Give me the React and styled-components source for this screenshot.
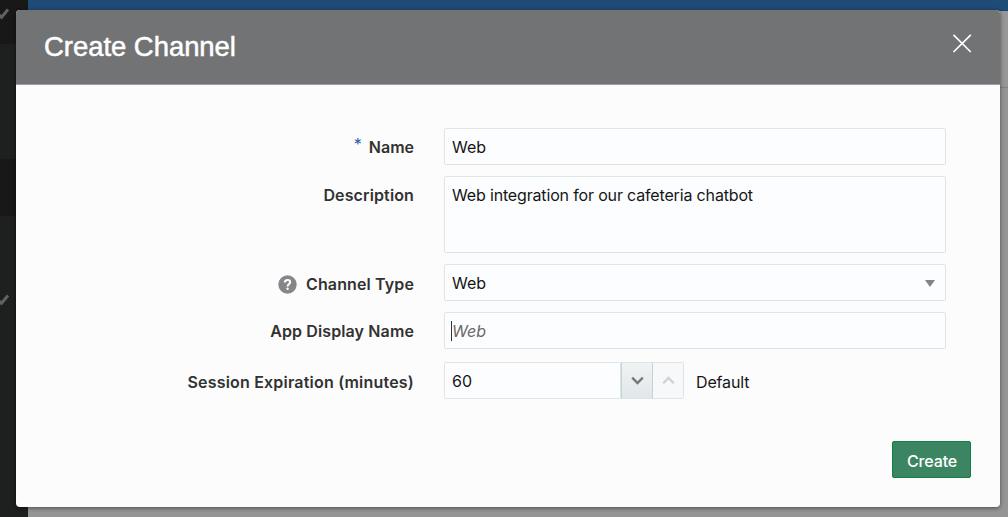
import React from "react";
import styled, { createGlobalStyle } from "styled-components";

const GlobalStyle = createGlobalStyle`
  *, *::before, *::after { box-sizing: border-box; }
  body { margin: 0; overflow: hidden; background: #959595; }
`;

const Page = styled.div`
  position: relative;
  display: flex;
  width: 1008px;
  height: 517px;
  overflow: hidden;
  font-family: Inter, "Liberation Sans", sans-serif;
  font-size: 16px;
  color: #161616;
`;

const Sidebar = styled.nav`
  display: flex;
  flex-direction: column;
  width: 28px;
  background: #1e201f;
`;

const SidebarItem = styled.div`
  height: ${(p) => p.$height}px;
  padding-top: ${(p) => p.$offset || 0}px;
  background: ${(p) => (p.$dark ? "#181818" : "#1e201f")};
  svg { display: block; }
`;

const Content = styled.main`
  flex: 1;
  display: flex;
  flex-direction: column;
`;

const TopBar = styled.div`
  height: 11px;
  background: #1f4b77;
  border-bottom: 1px solid #084a86;
`;

const SubHeader = styled.div`
  height: 77px;
  border-bottom: 1px solid #808386;
  background: #979797;
`;

const Dialog = styled.section`
  position: absolute;
  left: 16px;
  top: 10px;
  width: 984px;
  height: 497px;
  display: flex;
  flex-direction: column;
  border-radius: 4px;
  overflow: hidden;
  background: #fcfcfc;
  box-shadow: 0 1px 4px rgba(0, 0, 0, 0.5);
`;

const Header = styled.header`
  display: flex;
  justify-content: space-between;
  height: 75px;
  padding: 0 28px;
  background: #727375;
  border-bottom: 1px solid #9a9ea6;
`;

const Title = styled.h1`
  margin: 0;
  padding-top: 21px;
  font: 400 27.5px/32px "Liberation Sans", Arial, sans-serif;
  letter-spacing: -0.05px;
  color: #fff;
  -webkit-text-stroke: 0.5px #fff;
  white-space: nowrap;
`;

const CloseButton = styled.button`
  width: 20px;
  height: 20px;
  margin-top: 23px;
  padding: 0;
  border: 0;
  background: none;
  svg { display: block; }
`;

const Form = styled.form`
  display: flex;
  flex-direction: column;
  gap: 11px;
  padding: 43px 54px 0 0;
`;

const Row = styled.div`
  display: flex;
  align-items: flex-start;
  justify-content: flex-end;
  gap: 30px;
  margin-top: ${(p) => p.$push || 0}px;
`;

const Label = styled.label`
  display: flex;
  align-items: center;
  padding-top: ${(p) => p.$drop || 9}px;
  font-weight: 600;
  line-height: 20px;
  letter-spacing: ${(p) => p.$track || 0}px;
  color: #323232;
  white-space: nowrap;
`;

const Required = styled.span`
  margin: -7px 7px 0 0;
  font-size: 16px;
  font-weight: 400;
  color: #2b5fae;
`;

const Help = styled.svg`
  display: block;
  margin: 2px 9px 0 0;
`;

const Control = styled.div`
  display: flex;
  align-items: flex-start;
  justify-content: space-between;
  width: ${(p) => p.$width || 502}px;
  height: ${(p) => p.$height || 37}px;
  padding: 8px 7px;
  border: 1px solid #dfe4e7;
  border-radius: 2px;
  background: #fcfdfe;
  line-height: 20px;
  white-space: nowrap;
`;

const Text = styled.span`
  letter-spacing: ${(p) => p.$track || 0}px;
`;

const Arrow = styled.svg`
  margin: 7px 3px 0 0;
`;

const Placeholder = styled.span`
  height: 20px;
  margin-left: -1px;
  border-left: 1px solid #333;
  font-style: italic;
  color: #6a6a6a;
`;

const SpinGroup = styled.div`
  display: flex;
  width: 502px;
`;

const SpinButton = styled.button`
  display: grid;
  place-items: center;
  width: ${(p) => (p.$muted ? 32 : 31)}px;
  height: 37px;
  padding: 0;
  border: 1px solid #dfe4e7;
  border-left-color: #c6d0d9;
  border-right-width: ${(p) => (p.$muted ? 1 : 0)}px;
  border-radius: ${(p) => (p.$muted ? "0 2px 2px 0" : "0")};
  background: ${(p) => (p.$muted ? "#f7f8f9" : "linear-gradient(#f0f3f4, #e1e7e9)")};
`;

const Hint = styled.span`
  padding: 10px 0 0 12px;
  line-height: 20px;
  letter-spacing: -0.15px;
`;

const Footer = styled.footer`
  display: flex;
  justify-content: flex-end;
  padding: 42px 29px 0 0;
`;

const CreateButton = styled.button`
  width: 79px;
  height: 37px;
  padding: 2px 0 0 1px;
  border: 1px solid #118047;
  border-radius: 2px;
  background: #3c8562;
  color: #fff;
  font: 500 16px/20px Inter, "Liberation Sans", sans-serif;
  letter-spacing: -0.15px;
`;

function Check() {
  return (
    <svg width="10" height="12" viewBox="0 0 10 12">
      <path d="M-3 5L1.5 9.3L8 1.5" fill="none" stroke="#606262" strokeWidth="3" />
    </svg>
  );
}

function Chevron({ up, color }) {
  return (
    <svg width="13" height="9" viewBox="0 0 13 9">
      <path d={up ? "M1.2 7.2L6.5 1.9L11.8 7.2" : "M1.2 1.6L6.5 7L11.8 1.6"} fill="none" stroke={color} strokeWidth="2.3" />
    </svg>
  );
}

export default function App() {
  return (
    <Page>
      <GlobalStyle />
      <Sidebar>
        <SidebarItem $height={44} $offset={8} $dark><Check /></SidebarItem>
        <SidebarItem $height={115} />
        <SidebarItem $height={57} $dark />
        <SidebarItem $height={301} $offset={78}><Check /></SidebarItem>
      </Sidebar>
      <Content>
        <TopBar />
        <SubHeader />
      </Content>
      <Dialog role="dialog">
        <Header>
          <Title>Create Channel</Title>
          <CloseButton aria-label="Close">
            <svg width="20" height="20" viewBox="0 0 20 20">
              <path d="M1.5 1.8L18.8 19M18.8 1.8L1.5 19" stroke="#fff" strokeWidth="1.7" />
            </svg>
          </CloseButton>
        </Header>
        <Form>
          <Row>
            <Label><Required>*</Required>Name</Label>
            <Control><Text>Web</Text></Control>
          </Row>
          <Row>
            <Label $track={0.13}>Description</Label>
            <Control $height={77}><Text $track={-0.16}>Web integration for our cafeteria chatbot</Text></Control>
          </Row>
          <Row>
            <Label $track={0.13}>
              <Help width="19" height="19" viewBox="0 0 19 19">
                <circle cx="9.5" cy="9.5" r="9.2" fill="#85878a" />
                <path d="M6.8 7.4C6.8 5.7 8 4.9 9.5 4.9C11.1 4.9 12.2 5.8 12.2 7.2C12.2 9.1 9.6 9.2 9.6 11.4" fill="none" stroke="#fff" strokeWidth="2" />
                <circle cx="9.6" cy="13.7" r="1.2" fill="#fff" />
              </Help>
              Channel Type
            </Label>
            <Control>
              <Text>Web</Text>
              <Arrow width="10" height="7" viewBox="0 0 10 7"><path d="M0 0H10L5 7Z" fill="#828487" /></Arrow>
            </Control>
          </Row>
          <Row>
            <Label $track={0.12}>App Display Name</Label>
            <Control><Placeholder>Web</Placeholder></Control>
          </Row>
          <Row $push={2}>
            <Label $drop={10} $track={0.2}>Session Expiration (minutes)</Label>
            <SpinGroup>
              <Control $width={177}><Text>60</Text></Control>
              <SpinButton type="button" aria-label="Decrease"><Chevron color="#74787b" /></SpinButton>
              <SpinButton type="button" aria-label="Increase" $muted><Chevron up color="#cfd1d2" /></SpinButton>
              <Hint>Default</Hint>
            </SpinGroup>
          </Row>
        </Form>
        <Footer><CreateButton>Create</CreateButton></Footer>
      </Dialog>
    </Page>
  );
}
